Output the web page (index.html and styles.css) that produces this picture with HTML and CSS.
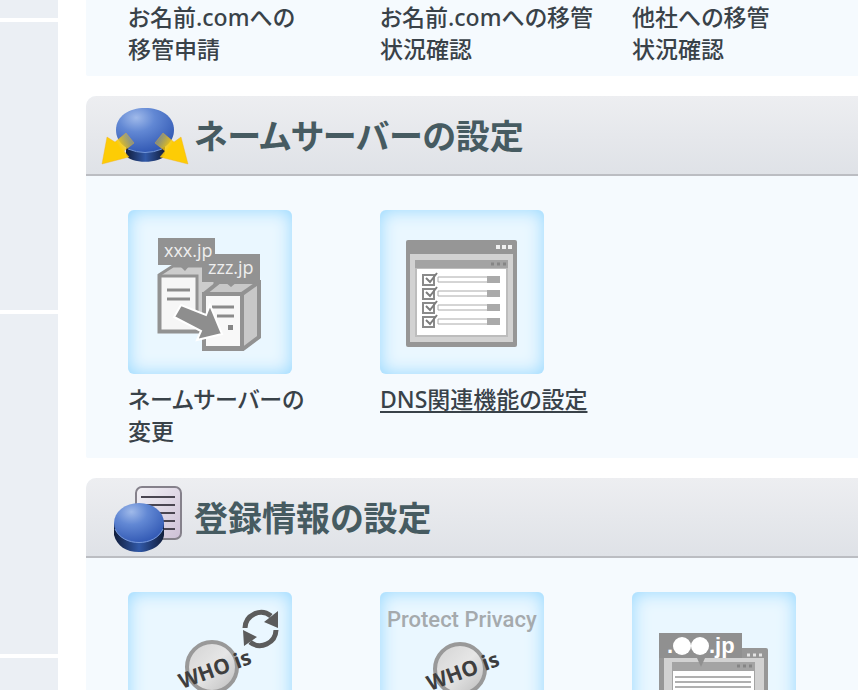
FILE: index.html
```html
<!DOCTYPE html>
<html lang="ja">
<head>
  <meta charset="UTF-8">
  <meta name="viewport" content="width=device-width, initial-scale=1.0">
  <title>ドメイン設定</title>
  <link rel="stylesheet" href="styles.css">
</head>
<body>
  <div class="page">
    <aside class="sidebar">
      <div class="side-block side-first"></div>
      <div class="side-block side-medium"></div>
      <div class="side-block side-large"></div>
      <div class="side-block side-rest"></div>
    </aside>

    <main class="content">
      <section class="panel panel-top">
        <ul class="menu menu-text">
          <li><a href="#">お名前.comへの<br>移管申請</a></li>
          <li><a href="#">お名前.comへの移管<br>状況確認</a></li>
          <li><a href="#">他社への移管<br>状況確認</a></li>
        </ul>
      </section>

      <section class="panel">
        <h2 class="panel-title">
          <svg class="title-icon" viewBox="0 0 108 78" aria-hidden="true">
            <defs>
              <radialGradient id="ball" cx="0.35" cy="0.22" r="0.8">
                <stop offset="0" stop-color="#a0baea"/>
                <stop offset="0.4" stop-color="#6288d4"/>
                <stop offset="1" stop-color="#3259b4"/>
              </radialGradient>
              <linearGradient id="base" x1="0" x2="1" y1="0" y2="0">
                <stop offset="0" stop-color="#111d3c"/>
                <stop offset="0.5" stop-color="#3159a8"/>
                <stop offset="1" stop-color="#111d3c"/>
              </linearGradient>
              <linearGradient id="arrowLeft" x1="1" x2="0.5" y1="0.1" y2="0.4">
                <stop offset="0" stop-color="#e5c62e" stop-opacity="0.2"/>
                <stop offset="1" stop-color="#fdcc05"/>
              </linearGradient>
              <linearGradient id="arrowRight" x1="0" x2="0.5" y1="0.1" y2="0.4">
                <stop offset="0" stop-color="#e5c62e" stop-opacity="0.2"/>
                <stop offset="1" stop-color="#fdcc05"/>
              </linearGradient>
            </defs>
            <path d="M40 50v9c3 9 35 9 39 0v-9z" fill="url(#base)"/>
            <path d="M30 34C30 20 43 12 59 12s29 8 29 22c0 12-10 22-29 22S30 46 30 34z" fill="url(#ball)"/>
            <path d="M42 53q17 7 34 0" fill="none" stroke="#7396d9"/>
            <path d="M16 68l5-27 8 5 11-9 8 10-10 8 5 6z" fill="url(#arrowLeft)" stroke="#f2ae20" stroke-opacity="0.4"/>
            <path d="M102 68l-7-27-7 5-11-9-8 10 10 8-5 6z" fill="url(#arrowRight)" stroke="#f2ae20" stroke-opacity="0.4"/>
          </svg>
          ネームサーバーの設定
        </h2>
        <ul class="menu">
          <li>
            <a href="#">
              <span class="tile">
                <svg viewBox="0 0 164 164" aria-hidden="true">
                  <path d="M31 65l14-9h42v60l-10 6H31z" fill="#ccc" stroke="#929292" stroke-width="3"/>
                  <path d="M32 66h37v55H32z" fill="#f6f6f6" stroke="#929292" stroke-width="3"/>
                  <path d="M39 80h23M39 89h23" stroke="#8b8b8b" stroke-width="3"/>
                  <path d="M76 84l15-12h40v55l-16 12H76z" fill="#c8c8c8" stroke="#929292" stroke-width="4"/>
                  <path d="M76 84h38v54H76z" fill="#f8f8f8" stroke="#929292" stroke-width="4"/>
                  <path d="M114 84l17-12" stroke="#929292" stroke-width="4"/>
                  <path d="M84 97h22M89 106h17" stroke="#8b8b8b" stroke-width="3"/>
                  <rect x="100" y="115" width="5" height="5" fill="#858585"/>
                  <path d="M30 28h57v27H62l-5 6-6-6H30zM74 44h58v28h-23l-6 5-6-5H74z" fill="#929292"/>
                  <path d="M46 107l7-12 25 10 4-10 12 29-25 6 4-9z" fill="#8e8e8e" stroke="#fff" stroke-width="2"/>
                  <text x="36" y="47" class="icon-domain">xxx.jp</text>
                  <text x="80" y="64" class="icon-domain">zzz.jp</text>
                </svg>
              </span>
              ネームサーバーの<br>変更
            </a>
          </li>
          <li>
            <a class="active" href="#">
              <span class="tile">
                <svg viewBox="0 0 164 164" aria-hidden="true">
                  <defs>
                    <g id="checkRow">
                      <path d="M43 65h11v10H43z" fill="#fff" stroke="#8a8a8a" stroke-width="2"/>
                      <path d="M46 68l4 4 7-9" fill="none" stroke="#7d7d7d" stroke-width="2"/>
                      <path d="M58 67h61v5H58z" fill="#fff" stroke="#aaa"/>
                      <path d="M107 66h13v7h-13z" fill="#aaa"/>
                    </g>
                  </defs>
                  <rect x="26" y="30" width="111" height="107" rx="2" fill="#969696"/>
                  <rect x="30" y="44" width="103" height="88" fill="#d2d2d2"/>
                  <rect x="35" y="50" width="93" height="77" fill="#bdbdbd"/>
                  <rect x="35" y="50" width="93" height="8" fill="#a3a3a3"/>
                  <rect x="37" y="59" width="89" height="66" fill="#fff"/>
                  <path d="M116 37h4m2 0h4m2 0h4" stroke="#f0f0f0" stroke-width="4"/>
                  <path d="M111 54h3m3 0h3m3 0h3" stroke="#858585" stroke-width="3"/>
                  <use href="#checkRow"/>
                  <use href="#checkRow" y="14"/>
                  <use href="#checkRow" y="28"/>
                  <use href="#checkRow" y="42"/>
                </svg>
              </span>
              DNS関連機能の設定
            </a>
          </li>
        </ul>
      </section>

      <section class="panel">
        <h2 class="panel-title">
          <svg class="title-icon" viewBox="0 0 108 78" aria-hidden="true">
            <defs>
              <linearGradient id="paper" x1="0" x2="1" y1="0" y2="1">
                <stop offset="0" stop-color="#f3f2f6"/>
                <stop offset="1" stop-color="#cdbfd6"/>
              </linearGradient>
            </defs>
            <rect x="50" y="9" width="45" height="52" rx="6" fill="url(#paper)" stroke="#85818b" stroke-width="2"/>
            <path d="M55 19h34M55 27h34M55 35h34M55 43h34M55 51h34" stroke="#4a4551" stroke-width="2"/>
            <path d="M28 45v12c3 11 12 17 25 17s24-8 25-17V45z" fill="url(#base)"/>
            <ellipse cx="53" cy="45" rx="25" ry="20" fill="url(#ball)"/>
            <path d="M29 51c8 18 40 18 48 0" fill="none" stroke="#7899d9"/>
          </svg>
          登録情報の設定
        </h2>
        <ul class="menu">
          <li>
            <a href="#">
              <span class="tile">
                <svg viewBox="0 0 164 164" aria-hidden="true">
                  <defs>
                    <linearGradient id="lens" x1="0" x2="1" y1="0" y2="1">
                      <stop offset="0" stop-color="#d2d2d2"/>
                      <stop offset="0.5" stop-color="#e6e6e6"/>
                      <stop offset="1" stop-color="#bcbcbc"/>
                    </linearGradient>
                  </defs>
                  <circle cx="84" cy="75" r="25" fill="url(#lens)" stroke="#999" stroke-width="4"/>
                  <text x="54" y="97" class="icon-whois" transform="rotate(-20 54 97)">WHO is</text>
                  <path d="M117 36a16 16 0 0 1 26-12M148 38a16 16 0 0 1-26 12" fill="none" stroke="#5c5c5c" stroke-width="5"/>
                  <path d="M150 19v17l-14-6zM115 38l14 7-13 9z" fill="#5c5c5c"/>
                </svg>
              </span>
            </a>
          </li>
          <li>
            <a href="#">
              <span class="tile">
                <svg viewBox="0 0 164 164" aria-hidden="true">
                  <text x="7" y="35" class="icon-privacy">Protect Privacy</text>
                  <circle cx="80" cy="77" r="25" fill="url(#lens)" stroke="#999" stroke-width="4"/>
                  <text x="50" y="99" class="icon-whois" transform="rotate(-20 50 99)">WHO is</text>
                </svg>
              </span>
            </a>
          </li>
          <li>
            <a href="#">
              <span class="tile">
                <svg viewBox="0 0 164 164" aria-hidden="true">
                  <rect x="27" y="56" width="109" height="90" rx="2" fill="#979797"/>
                  <rect x="32" y="66" width="100" height="76" fill="#d2d2d2"/>
                  <rect x="40" y="70" width="83" height="68" fill="#a4a4a4"/>
                  <rect x="41" y="79" width="81" height="58" fill="#fff"/>
                  <path d="M115 63h3m3 0h3m3 0h3" stroke="#e4e4e4" stroke-width="3"/>
                  <path d="M105 74h3m3 0h3m3 0h3" stroke="#858585" stroke-width="3"/>
                  <path d="M43 85h76M43 90h76M43 95h76M43 100h76" stroke="#b0b0b0" stroke-width="2"/>
                  <path d="M27 41h83v25H73l-4 9-4-9H27z" fill="#909090"/>
                  <circle cx="50" cy="54" r="9" fill="#fff"/>
                  <circle cx="68" cy="54" r="9" fill="#fff"/>
                  <text x="35" y="61" class="icon-jp">.</text>
                  <text x="77" y="61" class="icon-jp">.jp</text>
                </svg>
              </span>
            </a>
          </li>
        </ul>
      </section>
    </main>
  </div>
</body>
</html>
```

FILE: styles.css
```css
* {
  box-sizing: border-box;
}
body {
  margin: 0;
  background: #fff;
  color: #394249;
  font-family: "Noto Sans", "Noto Sans CJK JP", sans-serif;
  font-size: 23px;
  line-height: 32px;
}
.page {
  display: flex;
  gap: 28px;
  height: 100vh;
  overflow: hidden;
}
.sidebar {
  display: flex;
  flex: 0 0 58px;
  flex-direction: column;
  gap: 4px;
}
.side-block {
  flex-shrink: 0;
  background: #ebeff4;
}
.side-first {
  height: 18px;
}
.side-medium {
  height: 288px;
}
.side-large {
  height: 340px;
}
.side-rest {
  flex: 1;
}
.content {
  flex: 1;
  min-width: 0;
}
.panel {
  margin-bottom: 20px;
  background: #f5fafe;
  border-radius: 10px 0 0 2px;
}
.panel-top {
  border-top-left-radius: 0;
}
.panel-title {
  display: flex;
  align-items: center;
  height: 80px;
  margin: 0;
  border-bottom: 2px solid #bbbdc2;
  border-radius: 10px 0 0 0;
  background: linear-gradient(#edeef1, #dfe2e7);
  color: #465b61;
  font-family: "Noto Sans CJK JP", sans-serif;
  font-size: 34px;
  font-weight: bold;
  font-feature-settings: "palt";
  white-space: nowrap;
}
.title-icon {
  flex: none;
  width: 108px;
  height: 78px;
}
.menu {
  display: grid;
  grid-template-columns: repeat(3, 252px);
  margin: 0;
  padding: 34px 0 11px 42px;
  list-style: none;
}
.menu-text {
  padding-top: 1px;
}
.menu a {
  color: inherit;
  font-weight: 500;
  font-feature-settings: "palt";
  text-decoration: none;
  white-space: nowrap;
}
.menu a:hover,
.menu .active {
  text-decoration: underline;
  text-decoration-thickness: 2px;
  text-underline-offset: 3px;
}
.tile {
  display: block;
  width: 164px;
  height: 164px;
  margin-bottom: 9px;
  border-radius: 6px;
  background: #eaf7ff;
  box-shadow: inset 0 0 18px #94d7ff;
}
.tile svg {
  display: block;
  width: 100%;
  height: 100%;
}
.icon-domain {
  fill: #eee;
  font-family: "Open Sans", sans-serif;
  font-size: 18px;
  font-weight: normal;
}
.icon-whois {
  fill: #3e3e3e;
  font-family: "Open Sans", sans-serif;
  font-size: 21px;
  font-weight: bold;
}
.icon-privacy {
  fill: #a5aaad;
  font-family: Roboto, sans-serif;
  font-size: 22px;
  font-weight: 500;
}
.icon-jp {
  fill: #fff;
  font-family: "Liberation Sans", sans-serif;
  font-size: 22px;
  font-weight: bold;
}
```
